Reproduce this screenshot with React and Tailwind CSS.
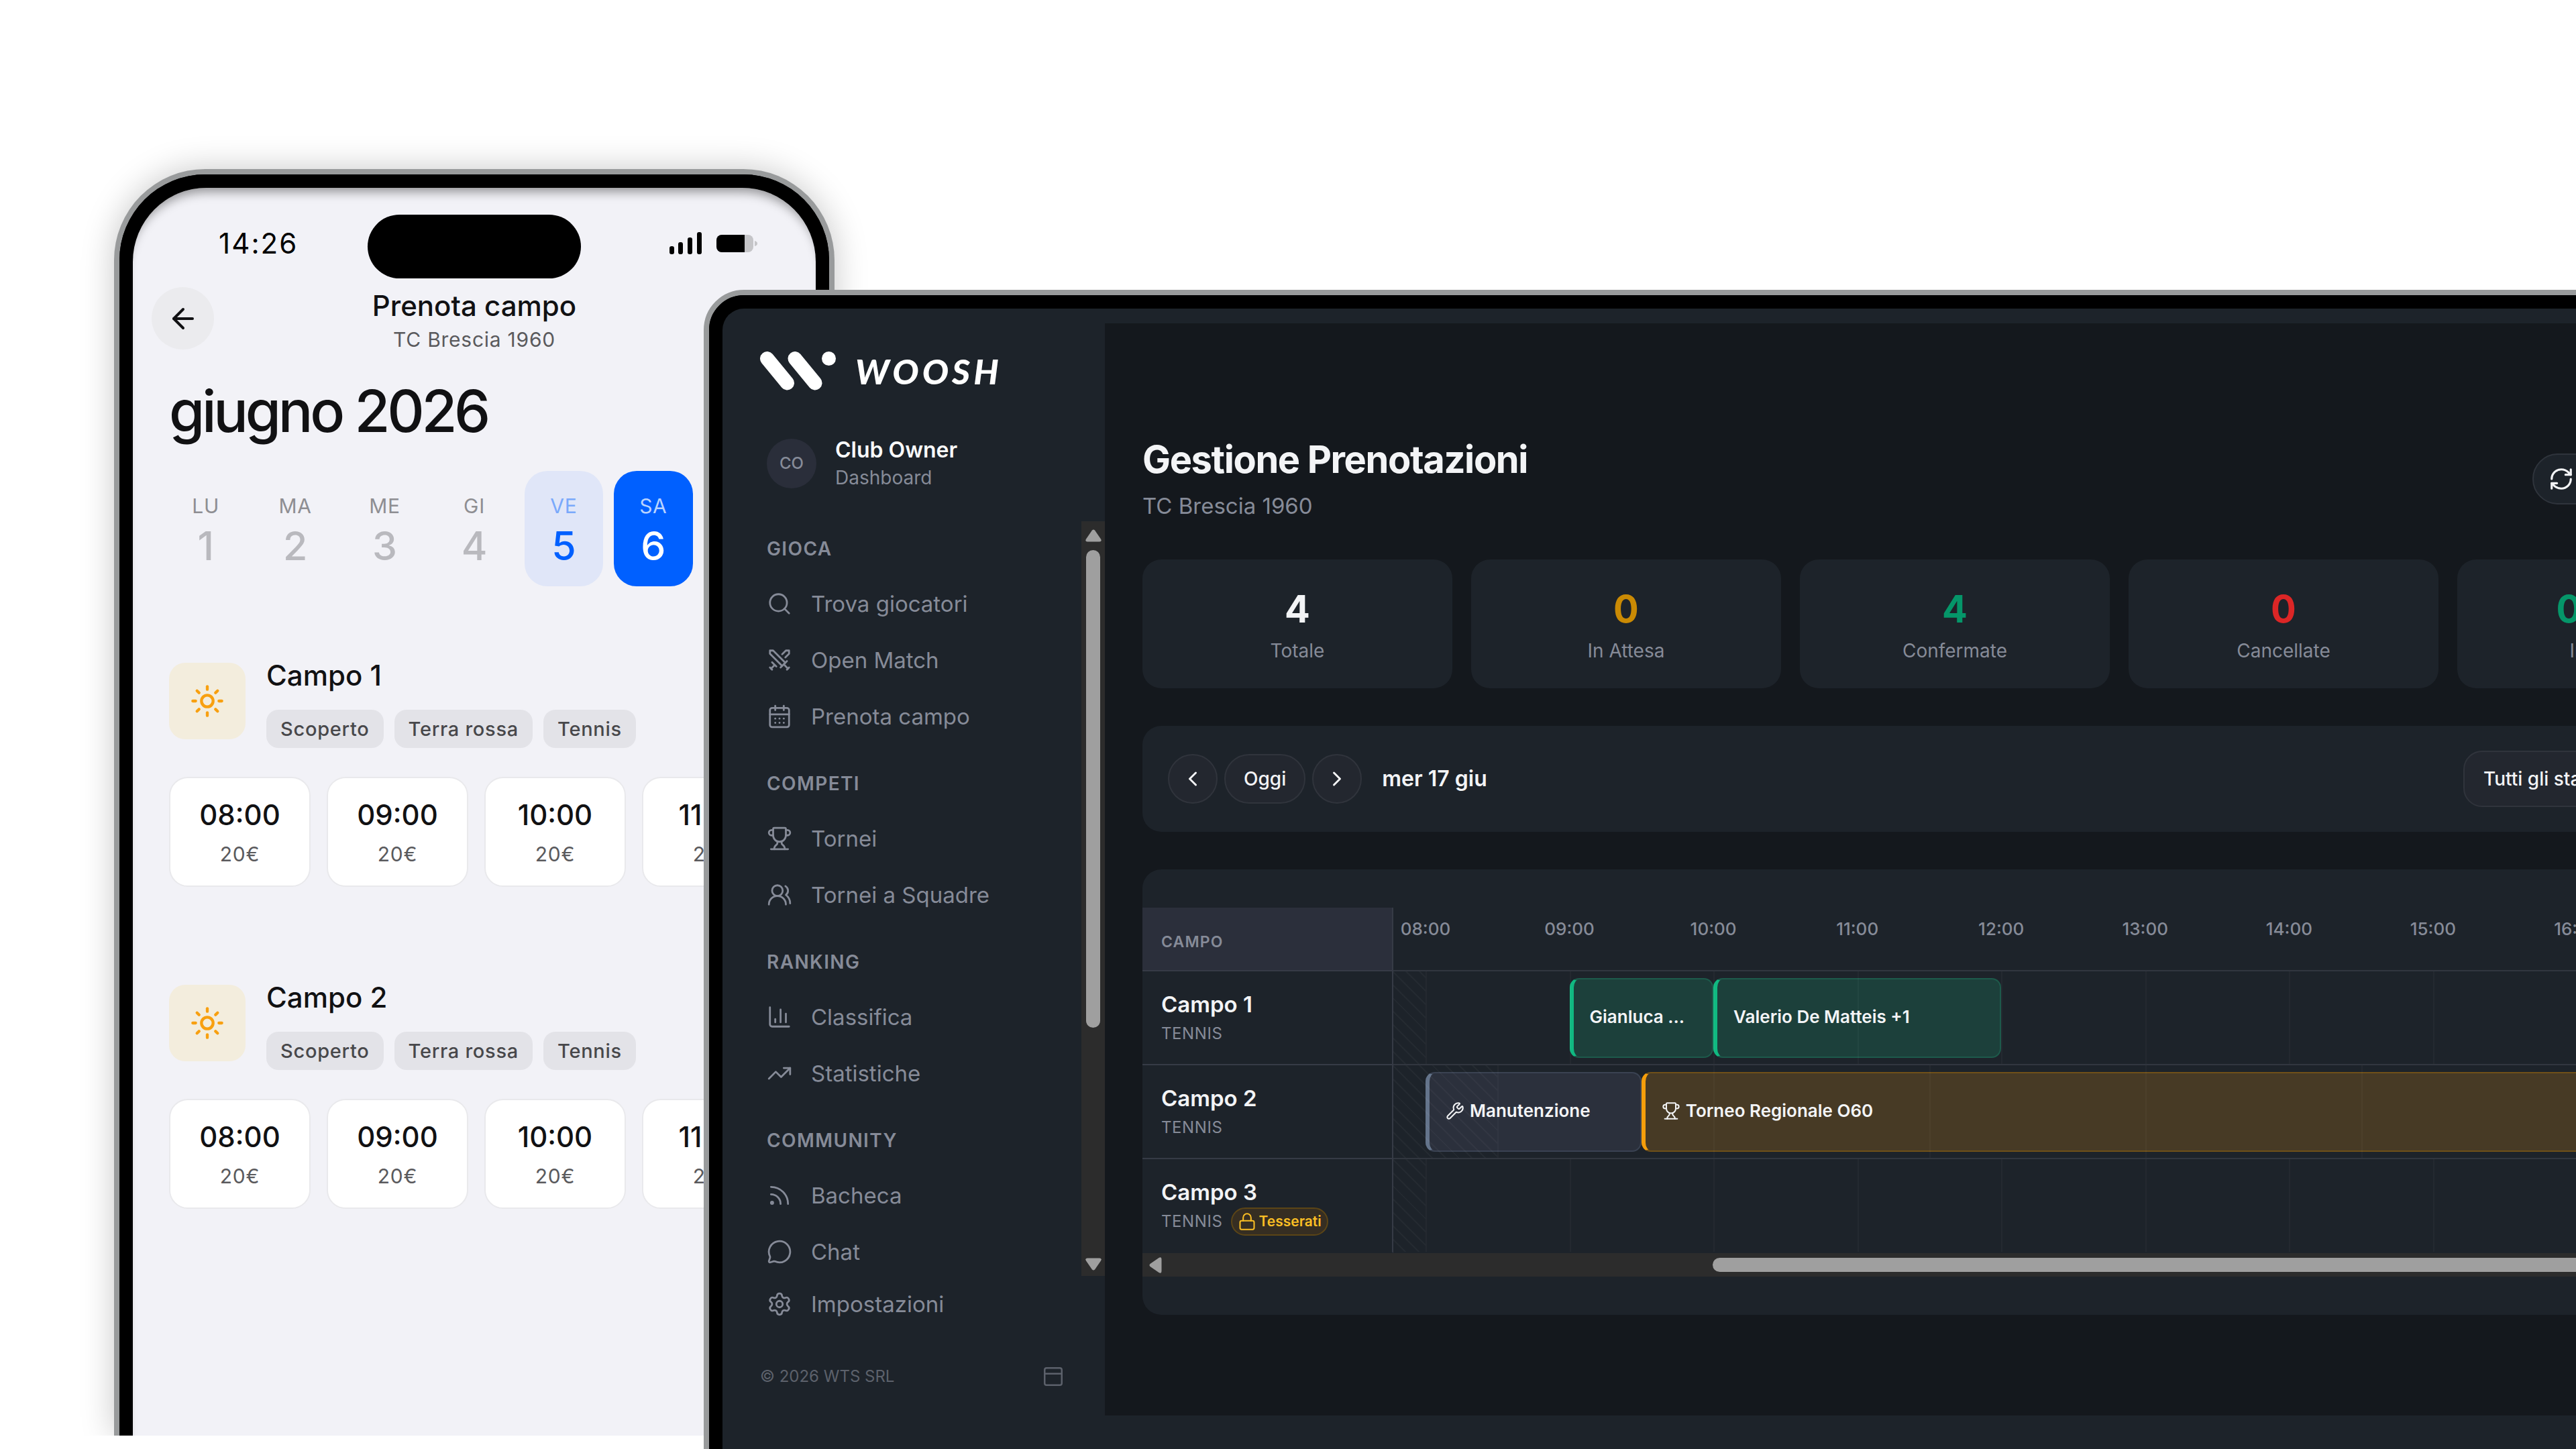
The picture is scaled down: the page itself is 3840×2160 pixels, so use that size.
import { useState } from 'react';
import {
    ArrowLeft,
    CalendarDays,
    ChartColumn,
    ChevronLeft,
    ChevronRight,
    Lock,
    MessageCircle,
    PanelTop,
    RefreshCw,
    Rss,
    Search,
    Settings,
    Sun,
    Swords,
    TrendingUp,
    Trophy,
    UsersRound,
    Wrench,
} from 'lucide-react';

const days = [
    { label: 'LU', number: 1, state: 'past' },
    { label: 'MA', number: 2, state: 'past' },
    { label: 'ME', number: 3, state: 'past' },
    { label: 'GI', number: 4, state: 'past' },
    { label: 'VE', number: 5, state: 'today' },
    { label: 'SA', number: 6, state: 'selected' },
    { label: 'DO', number: 7, state: 'past' },
];

const phoneCourts = [
    { name: 'Campo 1', tags: ['Scoperto', 'Terra rossa', 'Tennis'] },
    { name: 'Campo 2', tags: ['Scoperto', 'Terra rossa', 'Tennis'] },
];

const slots = ['08:00', '09:00', '10:00', '11:00'];

const navGroups = [
    {
        title: 'GIOCA',
        items: [
            { label: 'Trova giocatori', icon: Search },
            { label: 'Open Match', icon: Swords },
            { label: 'Prenota campo', icon: CalendarDays },
        ],
    },
    {
        title: 'COMPETI',
        items: [
            { label: 'Tornei', icon: Trophy },
            { label: 'Tornei a Squadre', icon: UsersRound },
        ],
    },
    {
        title: 'RANKING',
        items: [
            { label: 'Classifica', icon: ChartColumn },
            { label: 'Statistiche', icon: TrendingUp },
        ],
    },
    {
        title: 'COMMUNITY',
        items: [
            { label: 'Bacheca', icon: Rss },
            { label: 'Chat', icon: MessageCircle },
        ],
    },
];

const stats = [
    { value: '4', label: 'Totale', color: 'text-[#f3f4f6]' },
    { value: '0', label: 'In Attesa', color: 'text-[#ca8a04]' },
    { value: '4', label: 'Confermate', color: 'text-[#059669]' },
    { value: '0', label: 'Cancellate', color: 'text-[#dc2626]' },
    { value: '0.00€', label: 'Incassato', color: 'text-[#059669]' },
];

// The track runs from 08:00 to 17:00
const START = 8;
const HOURS = 9;
const pct = (hours) => `${(hours / HOURS) * 100}%`;
const hourly = Array.from({ length: HOURS }, (_, i) => START + i);
const everyNinety = Array.from({ length: 6 }, (_, i) => 8.5 + i * 1.5);

const eventStyles = {
    booking: 'bg-[#1c403b] border-[#1d5a4b] border-l-[#10b981]',
    maintenance: 'bg-[#2b303c] border-[#3a4252] border-l-[#64748b]',
    tournament: 'bg-[#473a25] border-[#6f5019] border-l-[#f59e0b]',
};

const courts = [
    {
        name: 'Campo 1',
        closedUntil: 8,
        lines: hourly,
        events: [
            { title: 'Gianluca ...', from: 9, to: 10, type: 'booking' },
            { title: 'Valerio De Matteis +1', from: 10, to: 12, type: 'booking' },
        ],
    },
    {
        name: 'Campo 2',
        closedUntil: 8.5,
        lines: everyNinety,
        events: [
            { title: 'Manutenzione', from: 8, to: 9.5, type: 'maintenance', icon: Wrench },
            { title: 'Torneo Regionale O60', from: 9.5, to: 17, type: 'tournament', icon: Trophy },
        ],
    },
    { name: 'Campo 3', closedUntil: 8, lines: hourly, events: [], membersOnly: true },
];

const dayBox = {
    past: '',
    today: 'bg-[#e0e6f8]',
    selected: 'bg-[#0060ff]',
};
const dayLabel = {
    past: 'text-[#8e8e92]',
    today: 'text-[#7aa9fb]',
    selected: 'text-[#b8d3ff]',
};
const dayNumber = {
    past: 'text-[#b9b9be]',
    today: 'text-[#0060ff]',
    selected: 'text-white',
};

const StatusBar = () => (
    <div className="relative flex h-[86px] items-center justify-between pl-[128px] pr-[87px]">
        <span className="text-[42px] leading-[52px] tracking-wider text-black">14:26</span>
        <div className="absolute left-1/2 top-0 h-[95px] w-[318px] -translate-x-1/2 rounded-full bg-black"></div>
        <div className="flex items-center gap-[22px]">
            <svg className="h-[34px] w-[48px]" viewBox="0 0 48 34" fill="black">
                <rect x="0" y="21" width="7" height="12" rx="3" />
                <rect x="13" y="15" width="7" height="18" rx="3" />
                <rect x="27" y="8" width="7" height="25" rx="3" />
                <rect x="41" y="0" width="7" height="33" rx="3" />
            </svg>
            <svg className="h-[26px] w-[61px]" viewBox="0 0 61 26">
                <rect x="0" y="0" width="55" height="26" rx="8" fill="#c5c5c8" />
                <path d="M8 0h34v26H8a8 8 0 0 1-8-8V8a8 8 0 0 1 8-8z" fill="black" />
                <path d="M57 9c3 1 4 2 4 4s-1 3-4 4z" fill="#c5c5c8" />
            </svg>
        </div>
    </div>
);

const PhoneCourt = ({ court }) => (
    <section className="mb-[139px]">
        <div className="flex items-start gap-[31px] px-[54px]">
            <div className="mt-[7px] flex size-[114px] shrink-0 items-center justify-center rounded-[24px] bg-[#f3eddd]">
                <Sun size={52} strokeWidth={2} className="text-[#f8a010]" />
            </div>
            <div>
                <h2 className="text-[42px] leading-[52px] font-medium text-[#111113]">{court.name}</h2>
                <div className="mt-[25px] flex gap-4">
                    {court.tags.map((tag) => (
                        <span
                            key={tag}
                            className="rounded-[18px] bg-[#e3e3e8] px-[21px] text-[29px] leading-[57px] font-medium tracking-wide text-[#48484b]"
                        >
                            {tag}
                        </span>
                    ))}
                </div>
            </div>
        </div>
        <div className="mt-[43px] flex gap-6 overflow-hidden pl-[54px]">
            {slots.map((slot) => (
                <button
                    key={slot}
                    className="flex h-[164px] w-[211px] shrink-0 flex-col items-center justify-center rounded-[28px] border-2 border-[#e9e9ec] bg-white pt-2"
                >
                    <span className="text-[42px] leading-[58px] font-medium text-[#111113]">{slot}</span>
                    <span className="text-[30px] leading-[58px] tracking-wide text-[#5a5a5d]">20€</span>
                </button>
            ))}
        </div>
    </section>
);

const Phone = () => (
    <div className="h-full w-[1074px] rounded-t-[136px] border-8 border-b-0 border-[#999b9c] bg-black shadow-[0_0_50px_rgba(0,0,0,0.22)]">
        <div className="h-full rounded-t-[128px] border-20 border-b-0 border-black bg-black">
            <div className="h-full overflow-hidden rounded-t-[110px] bg-[#f2f2f7] pt-10 shadow-[inset_0_16px_16px_-10px_rgba(0,0,0,0.4)]">
                <StatusBar />
                <header className="mt-[22px] flex items-start justify-between px-[28px]">
                    <button
                        aria-label="Indietro"
                        className="flex size-[93px] items-center justify-center rounded-full bg-[#ebebee] text-[#111113]"
                    >
                        <ArrowLeft size={48} strokeWidth={2} />
                    </button>
                    <div className="text-center">
                        <h1 className="text-[42px] leading-[56px] font-medium text-[#111113]">Prenota campo</h1>
                        <p className="text-[30px] leading-[44px] tracking-wide text-[#5a5a5d]">TC Brescia 1960</p>
                    </div>
                    <div className="w-[93px]"></div>
                </header>
                <h2 className="mt-[33px] px-[54px] text-[86px] leading-[104px] font-medium tracking-tighter text-[#111113]">
                    giugno 2026
                </h2>
                <div className="mt-[37px] grid grid-cols-7 gap-4 px-[50px]">
                    {days.map((day) => (
                        <button
                            key={day.label}
                            className={`flex h-[172px] flex-col items-center justify-center rounded-[34px] pt-2 ${dayBox[day.state]}`}
                        >
                            <span className={`text-[30px] leading-[44px] tracking-wide ${dayLabel[day.state]}`}>
                                {day.label}
                            </span>
                            <span className={`text-[59px] leading-[76px] font-medium ${dayNumber[day.state]}`}>
                                {day.number}
                            </span>
                        </button>
                    ))}
                </div>
                <div className="mt-[107px]">
                    {phoneCourts.map((court) => (
                        <PhoneCourt key={court.name} court={court} />
                    ))}
                </div>
            </div>
        </div>
    </div>
);

const Logo = () => (
    <div className="flex items-center gap-7">
        <svg className="h-[58px] w-[114px]" viewBox="0 0 114 58">
            <g stroke="white" strokeWidth="21" strokeLinecap="round">
                <path d="M10.5 10.5 L40.5 47" />
                <path d="M52 10.5 L82 47" />
            </g>
            <circle cx="102.500" cy="10.500" r="10.500" fill="white" />
        </svg>
        <span className="font-[Lato] text-[52px] leading-[58px] font-black tracking-widest text-white italic">
            WOOSH
        </span>
    </div>
);

const NavLink = ({ label, icon: Icon }) => (
    <a href="#" className="flex h-[84px] items-center gap-7 pl-[66px] text-[33px] leading-[48px] text-[#868b98]">
        <Icon size={38} strokeWidth={1.75} />
        {label}
    </a>
);

const Sidebar = () => (
    <aside className="flex w-[570px] shrink-0 flex-col pt-[42px]">
        <div className="pl-14">
            <Logo />
        </div>
        <div className="mt-[68px] flex items-center gap-7 pl-[66px]">
            <div className="flex size-[74px] items-center justify-center rounded-full bg-[#2a2e3a] text-[24px] font-medium text-[#868b98]">
                CO
            </div>
            <div>
                <p className="text-[32px] leading-[42px] font-semibold text-[#f9fafb]">Club Owner</p>
                <p className="text-[28px] leading-[40px] text-[#868b98]">Dashboard</p>
            </div>
        </div>
        <div className="mt-[45px] flex h-0 grow overflow-hidden">
            <nav className="grow pt-[21px]">
                {navGroups.map((group) => (
                    <div key={group.title} className="mb-[38px]">
                        <h3 className="mb-5 pl-[66px] text-[28px] leading-[40px] font-semibold tracking-wider text-[#868b98]">
                            {group.title}
                        </h3>
                        {group.items.map((item) => (
                            <NavLink key={item.label} {...item} />
                        ))}
                    </div>
                ))}
            </nav>
            <div className="flex w-[35px] flex-col items-center justify-between bg-[#2c2c2c] pt-3 pb-2">
                <div className="flex flex-col items-center gap-3">
                    <svg className="h-[19px] w-6" viewBox="0 0 24 19" fill="#9f9f9f">
                        <path d="M10 1.500q2-2 4 0l9 13q2 4-2 4H3q-4 0-2-4z" />
                    </svg>
                    <div className="h-[712px] w-[21px] rounded-full bg-[#9f9f9f]"></div>
                </div>
                <svg className="h-[19px] w-6" viewBox="0 0 24 19" fill="#9f9f9f">
                    <path d="M10 17.500q2 2 4 0l9-13q2-4-2-4H3q-4 0-2 4z" />
                </svg>
            </div>
        </div>
        <NavLink label="Impostazioni" icon={Settings} />
        <footer className="flex h-[124px] items-center justify-between pt-2 pr-[60px] pl-14 text-[#5c616b]">
            <span className="text-[24px] leading-[32px]">© 2026 WTS SRL</span>
            <button aria-label="Comprimi menu">
                <PanelTop size={34} strokeWidth={1.75} />
            </button>
        </footer>
    </aside>
);

const Event = ({ event }) => {
    const Icon = event.icon;
    return (
        <div
            className={`absolute top-[10px] flex h-[119px] items-center gap-2 rounded-[14px] border-2 border-l-[6px] px-6 pb-1 text-[26px] leading-[36px] font-semibold text-[#f3f4f6] ${eventStyles[event.type]}`}
            style={{ left: pct(event.from - START), width: pct(event.to - event.from) }}
        >
            {Icon && <Icon size={28} strokeWidth={1.75} className="shrink-0" />}
            <span className="truncate">{event.title}</span>
        </div>
    );
};

const Timeline = () => (
    <section className="mt-14 overflow-hidden rounded-[28px] bg-[#1d232a] py-[57px]">
        <table className="w-full table-fixed border-separate border-spacing-0">
            <thead>
                <tr>
                    <th className="w-[374px] border-r-2 border-b-2 border-[#363b46] bg-[#2b2f3b] p-0 text-left">
                        <div className="flex h-[93px] items-center pt-2 pl-7 text-[23px] leading-[32px] font-semibold tracking-wider text-[#868b98]">
                            CAMPO
                        </div>
                    </th>
                    <th className="border-b-2 border-[#31363f] p-0 font-medium">
                        <div className="h-[93px] overflow-hidden pl-[48px]">
                            <div className="relative w-[1931px]">
                                {hourly.map((hour, i) => (
                                    <span
                                        key={hour}
                                        className="absolute top-[14px] -translate-x-1/2 text-[26px] leading-[36px] text-[#868b98]"
                                        style={{ left: pct(i) }}
                                    >
                                        {String(hour).padStart(2, '0')}:00
                                    </span>
                                ))}
                            </div>
                        </div>
                    </th>
                </tr>
            </thead>
            <tbody className="[&>tr:last-child>*]:border-b-transparent">
                {courts.map((court) => (
                    <tr key={court.name}>
                        <th className="border-r-2 border-b-2 border-[#363b46] p-0 text-left">
                            <div className="flex h-[138px] flex-col justify-center pt-[3px] pl-7">
                                <span className="text-[33px] leading-[44px] font-semibold text-[#f3f4f6]">{court.name}</span>
                                <div className="flex h-[44px] items-center gap-3">
                                    <span className="text-[24px] leading-[32px] font-normal tracking-wide text-[#868b98]">
                                        TENNIS
                                    </span>
                                    {court.membersOnly && (
                                        <span className="flex h-[42px] items-center gap-1 rounded-full border-2 border-[#5c4516] bg-[#362e22] px-2 text-[21px] leading-[32px] font-semibold text-[#fbbf24]">
                                            <Lock size={28} strokeWidth={1.75} />
                                            Tesserati
                                        </span>
                                    )}
                                </div>
                            </div>
                        </th>
                        <td className="border-b-2 border-[#31363f] p-0">
                            <div className="h-[138px] overflow-hidden pl-[48px]">
                                <div className="relative h-[138px] w-[1931px]">
                                    {court.events.map((event) => (
                                        <Event key={event.title} event={event} />
                                    ))}
                                    {/* closed hours before opening */}
                                    <div
                                        className="absolute inset-y-0 -left-12 bg-[repeating-linear-gradient(45deg,transparent_0px,transparent_12px,rgba(255,255,255,0.03)_12px,rgba(255,255,255,0.03)_14px)]"
                                        style={{ width: `calc(48px + ${pct(court.closedUntil - START)})` }}
                                    ></div>
                                    {court.lines.map((line) => (
                                        <div
                                            key={line}
                                            className="absolute inset-y-0 w-[2px] bg-white/3"
                                            style={{ left: pct(line - START) }}
                                        ></div>
                                    ))}
                                </div>
                            </div>
                        </td>
                    </tr>
                ))}
            </tbody>
        </table>
        <div className="flex h-[35px] items-center justify-between bg-[#2c2c2c] px-[10px]">
            <svg className="h-6 w-[19px]" viewBox="0 0 19 24" fill="#9f9f9f">
                <path d="M1.500 10q-2 2 0 4l13 9q4 2 4-2V3q0-4-4-2z" />
            </svg>
            <div className="mr-3 h-[21px] w-[1550px] rounded-full bg-[#9f9f9f]"></div>
        </div>
    </section>
);

const Dashboard = () => {
    const [status, setStatus] = useState('all');

    return (
        <main className="min-w-0 grow bg-[#14181d] px-14 pt-[167px] pb-[150px]">
            <div className="flex items-center justify-between">
                <div>
                    <h1 className="text-[56px] leading-[72px] font-bold tracking-tight text-[#f3f4f6]">
                        Gestione Prenotazioni
                    </h1>
                    <p className="mt-[9px] text-[33px] leading-[48px] text-[#868b98]">TC Brescia 1960</p>
                </div>
                <button className="flex h-[76px] w-[350px] items-center gap-4 rounded-full border-2 border-[#2f343c] bg-[#1d232a] px-[22px] text-[28px] font-medium text-[#f3f4f6]">
                    <RefreshCw size={38} strokeWidth={2} />
                    Aggiorna
                </button>
            </div>

            <div className="mt-14 grid grid-cols-5 gap-7">
                {stats.map((stat) => (
                    <div key={stat.label} className="rounded-[28px] bg-[#1d232a] py-9 text-center">
                        <p className={`text-[56px] leading-[76px] font-bold ${stat.color}`}>{stat.value}</p>
                        <p className="mt-1 text-[28px] leading-[40px] text-[#868b98]">{stat.label}</p>
                    </div>
                ))}
            </div>

            <div className="mt-14 flex items-center justify-between rounded-[28px] bg-[#1d232a] px-[38px] py-[37px] text-[#f3f4f6]">
                <div className="flex items-center gap-[10px]">
                    <button
                        aria-label="Giorno precedente"
                        className="flex size-[74px] items-center justify-center rounded-full border-2 border-[#30343c] bg-[#23272f]"
                    >
                        <ChevronLeft size={36} strokeWidth={2} />
                    </button>
                    <button className="h-[74px] rounded-full border-2 border-[#30343c] bg-[#23272f] px-[27px] text-[28px] font-medium">
                        Oggi
                    </button>
                    <button
                        aria-label="Giorno successivo"
                        className="flex size-[74px] items-center justify-center rounded-full border-2 border-[#30343c] bg-[#23272f]"
                    >
                        <ChevronRight size={36} strokeWidth={2} />
                    </button>
                    <span className="ml-5 text-[32px] leading-[48px] font-semibold">mer 17 giu</span>
                </div>
                <select
                    aria-label="Stato"
                    value={status}
                    onChange={(e) => setStatus(e.target.value)}
                    className="h-[84px] w-[415px] appearance-none rounded-[28px] border-2 border-[#30343c] bg-[#23272f] px-7 text-[28px] font-medium"
                >
                    <option value="all">Tutti gli stati</option>
                    <option value="confirmed">Confermate</option>
                    <option value="cancelled">Cancellate</option>
                </select>
            </div>

            <Timeline />
        </main>
    );
};

const Tablet = () => (
    <div className="w-[82vw] min-w-[3160px] shrink-0 rounded-t-[60px] border-8 border-[#999b9c] bg-black">
        <div className="rounded-t-[52px] border-20 border-black">
            <div className="flex rounded-t-[32px] bg-[#1d232a] pt-[22px] pb-[120px]">
                <Sidebar />
                <Dashboard />
            </div>
        </div>
    </div>
);

export default function App() {
    return (
        <div className="flex h-screen items-start overflow-hidden bg-white font-[Inter,sans-serif]">
            <div className="h-[calc(100vh-20px)] shrink-0 overflow-hidden pt-[252px] pr-[195px] pl-[170px]">
                <Phone />
            </div>
            <div className="relative -ml-[390px] pt-[432px]">
                <Tablet />
            </div>
        </div>
    );
}
